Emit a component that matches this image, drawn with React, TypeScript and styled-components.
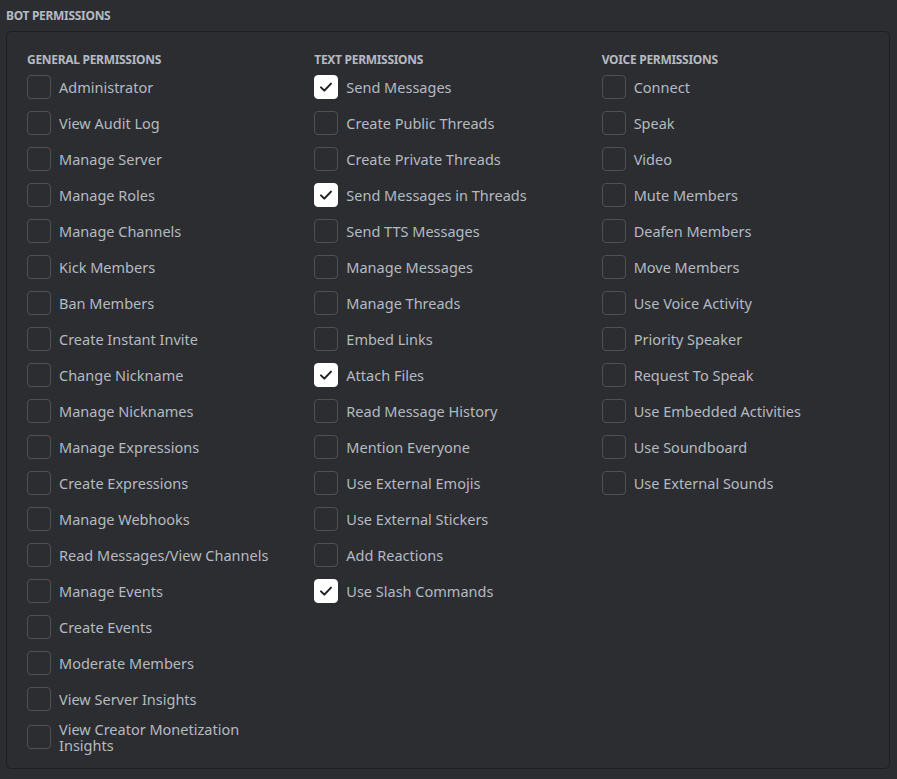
import React from 'react';
import styled, { createGlobalStyle } from 'styled-components';

const GlobalStyle = createGlobalStyle`
    html, body {
        margin: 0;
        padding: 0;
        background-color: #2b2d31;
    }
    body {
        font-family: "Noto Sans", "Open Sans", sans-serif;
    }
`;

const Page = styled.div`
    width: 897px;
    height: 779px;
    box-sizing: border-box;
    padding: 8px 7px 0 6px;
    background-color: #2b2d31;
`;

const Title = styled.h2`
    margin: 0 0 7px 0;
    font-size: 12px;
    line-height: 16px;
    font-weight: 700;
    letter-spacing: -0.3px;
    color: #b5bac1;
    text-transform: uppercase;
`;

const Panel = styled.div`
    box-sizing: border-box;
    height: 738px;
    border: 1px solid #1e1f22;
    border-radius: 5px;
    background-color: #2b2d31;
    padding: 20px 20px 16px 20px;
    display: grid;
    grid-template-columns: repeat(3, 1fr);
    column-gap: 20px;
    align-items: start;
`;

const Column = styled.div`
    display: flex;
    flex-direction: column;
`;

const ColumnTitle = styled.h3`
    margin: 0 0 5px 0;
    font-size: 12px;
    line-height: 16px;
    font-weight: 700;
    letter-spacing: -0.3px;
    color: #b5bac1;
    text-transform: uppercase;
`;

const Row = styled.label`
    display: flex;
    align-items: center;
    gap: 8px;
    min-height: 28px;
    margin-bottom: 8px;
    cursor: pointer;
`;

const Box = styled.span<{ checked: boolean }>`
    flex: 0 0 auto;
    box-sizing: border-box;
    width: 24px;
    height: 24px;
    border-radius: 4px;
    border: 1px solid ${props => (props.checked ? '#ffffff' : '#4e5058')};
    background-color: ${props => (props.checked ? '#ffffff' : 'transparent')};
    display: flex;
    align-items: center;
    justify-content: center;
`;

const Label = styled.span`
    font-size: 14.5px;
    line-height: 16px;
    color: #b5bac1;
`;

const Check = () => (
    <svg width="16" height="16" viewBox="0 0 24 24">
        <path
            d="M4.5 12.5l5 5 10-10.5"
            fill="none"
            stroke="#1e1f22"
            strokeWidth="3"
            strokeLinecap="round"
            strokeLinejoin="round"
        />
    </svg>
);

interface Perm {
    name: string;
    checked?: boolean;
}

const groups: { title: string; perms: Perm[] }[] = [
    {
        title: 'General Permissions',
        perms: [
            { name: 'Administrator' },
            { name: 'View Audit Log' },
            { name: 'Manage Server' },
            { name: 'Manage Roles' },
            { name: 'Manage Channels' },
            { name: 'Kick Members' },
            { name: 'Ban Members' },
            { name: 'Create Instant Invite' },
            { name: 'Change Nickname' },
            { name: 'Manage Nicknames' },
            { name: 'Manage Expressions' },
            { name: 'Create Expressions' },
            { name: 'Manage Webhooks' },
            { name: 'Read Messages/View Channels' },
            { name: 'Manage Events' },
            { name: 'Create Events' },
            { name: 'Moderate Members' },
            { name: 'View Server Insights' },
            { name: 'View Creator Monetization Insights' },
        ],
    },
    {
        title: 'Text Permissions',
        perms: [
            { name: 'Send Messages', checked: true },
            { name: 'Create Public Threads' },
            { name: 'Create Private Threads' },
            { name: 'Send Messages in Threads', checked: true },
            { name: 'Send TTS Messages' },
            { name: 'Manage Messages' },
            { name: 'Manage Threads' },
            { name: 'Embed Links' },
            { name: 'Attach Files', checked: true },
            { name: 'Read Message History' },
            { name: 'Mention Everyone' },
            { name: 'Use External Emojis' },
            { name: 'Use External Stickers' },
            { name: 'Add Reactions' },
            { name: 'Use Slash Commands', checked: true },
        ],
    },
    {
        title: 'Voice Permissions',
        perms: [
            { name: 'Connect' },
            { name: 'Speak' },
            { name: 'Video' },
            { name: 'Mute Members' },
            { name: 'Deafen Members' },
            { name: 'Move Members' },
            { name: 'Use Voice Activity' },
            { name: 'Priority Speaker' },
            { name: 'Request To Speak' },
            { name: 'Use Embedded Activities' },
            { name: 'Use Soundboard' },
            { name: 'Use External Sounds' },
        ],
    },
];

const App: React.FC = () => {
    return (
        <Page>
            <GlobalStyle />
            <Title>Bot Permissions</Title>
            <Panel>
                {groups.map(group => (
                    <Column key={group.title}>
                        <ColumnTitle>{group.title}</ColumnTitle>
                        {group.perms.map(perm => (
                            <Row key={perm.name}>
                                <Box checked={!!perm.checked}>{perm.checked && <Check />}</Box>
                                <Label>{perm.name}</Label>
                            </Row>
                        ))}
                    </Column>
                ))}
            </Panel>
        </Page>
    );
};

export default App;
